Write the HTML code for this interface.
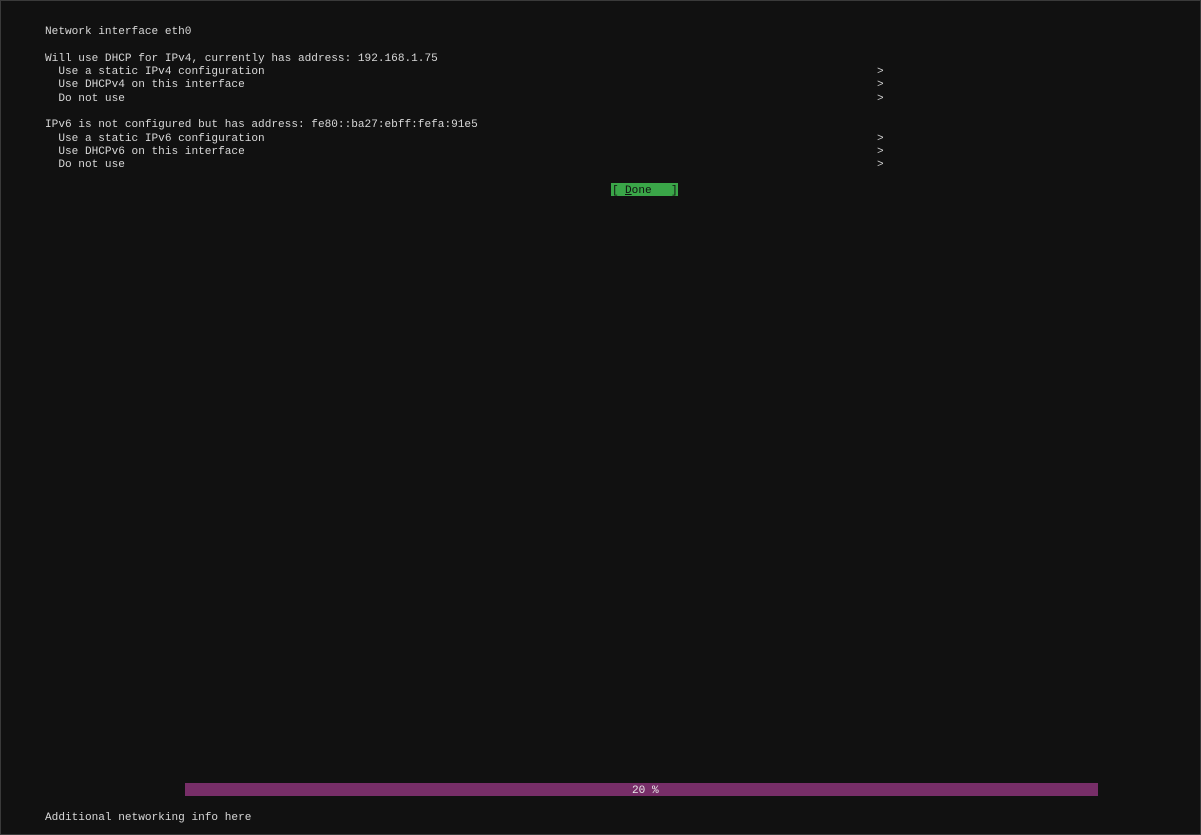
<!DOCTYPE html>
<html><head><meta charset="utf-8"><style>
html,body{margin:0;padding:0;}
body{width:1201px;height:835px;background:#111111;position:relative;overflow:hidden;font-family:"Liberation Mono","DejaVu Sans Mono",monospace;font-size:11.1px;color:#d8d8d8;}
.frame{position:absolute;left:0;top:0;width:1199px;height:833px;border:1px solid #3a3a3a;}
.t{position:absolute;white-space:pre;line-height:13px;}
.g{position:absolute;left:877px;white-space:pre;line-height:13px;color:#cfcfcf;}
.done{position:absolute;left:611px;top:183px;width:67px;height:13px;background:#3aa648;color:#111;white-space:pre;line-height:13px;overflow:hidden;}
.done span{position:absolute;top:2px;}
.bar{position:absolute;left:185px;top:783px;width:913px;height:13px;background:#772e68;}
</style></head><body>
<div class="frame"></div>
<div class="t" style="left:45px;top:26px">Network interface eth0</div>
<div class="t" style="left:45px;top:53px">Will use DHCP for IPv4, currently has address: 192.168.1.75</div>
<div class="t" style="left:45px;top:66px">  Use a static IPv4 configuration</div>
<div class="t" style="left:45px;top:79px">  Use DHCPv4 on this interface</div>
<div class="t" style="left:45px;top:93px">  Do not use</div>
<div class="g" style="top:66px">&gt;</div>
<div class="g" style="top:79px">&gt;</div>
<div class="g" style="top:93px">&gt;</div>
<div class="t" style="left:45px;top:119px">IPv6 is not configured but has address: fe80::ba27:ebff:fefa:91e5</div>
<div class="t" style="left:45px;top:133px">  Use a static IPv6 configuration</div>
<div class="t" style="left:45px;top:146px">  Use DHCPv6 on this interface</div>
<div class="t" style="left:45px;top:159px">  Do not use</div>
<div class="g" style="top:133px">&gt;</div>
<div class="g" style="top:146px">&gt;</div>
<div class="g" style="top:159px">&gt;</div>
<div class="done"><span style="left:1px">[</span><span style="left:14px"><u>D</u>one</span><span style="left:60px">]</span></div>
<div class="bar"></div>
<div class="t" style="left:632px;top:785px;color:#e8e8e8">20 %</div>
<div class="t" style="left:45px;top:812px">Additional networking info here</div>
</body></html>
